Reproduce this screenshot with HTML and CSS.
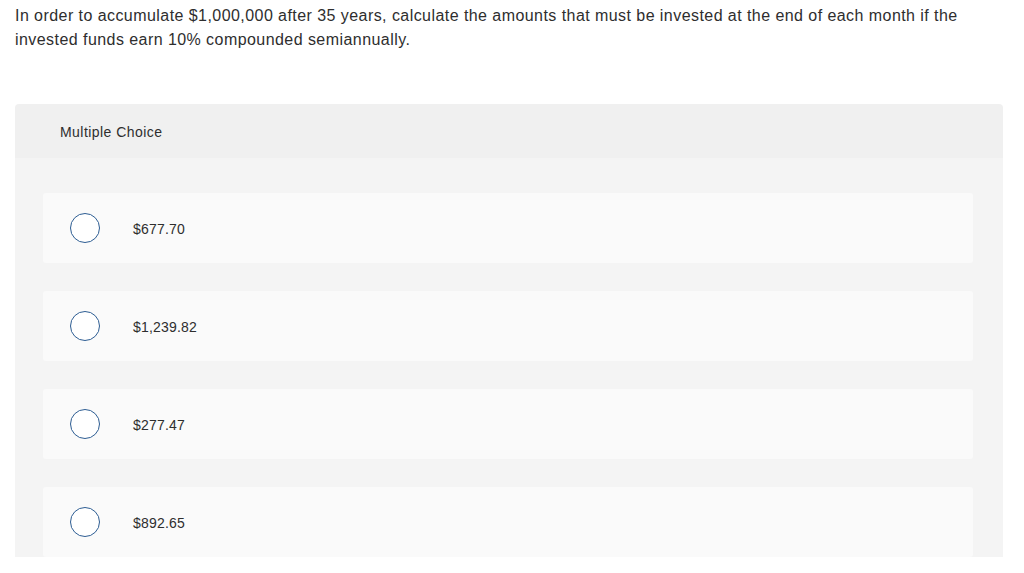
FILE: index.html
```html
<!DOCTYPE html>
<html lang="en">
<head>
<meta charset="utf-8">
<title>Multiple Choice</title>
<link rel="stylesheet" href="styles.css">
</head>
<body>
<div class="page">
  <p class="question">In order to accumulate $1,000,000 after 35 years, calculate the amounts that must be invested at the end of each month if the invested funds earn 10% compounded semiannually.</p>
  <section class="panel">
    <header class="panel-head">Multiple Choice</header>
    <div class="panel-body">
      <label class="option"><span class="radio"></span><span class="answer">$677.70</span></label>
      <label class="option"><span class="radio"></span><span class="answer">$1,239.82</span></label>
      <label class="option"><span class="radio"></span><span class="answer">$277.47</span></label>
      <label class="option"><span class="radio"></span><span class="answer">$892.65</span></label>
    </div>
  </section>
</div>
</body>
</html>
```
FILE: styles.css
```css
* { box-sizing: border-box; }
html, body { margin: 0; padding: 0; background: #fff; }
body {
  font-family: "Liberation Sans", Arial, sans-serif;
  color: #333;
}
.page {
  padding: 4px 21px 0 15px;
}
.question {
  margin: 0;
  font-size: 16px;
  line-height: 24px;
  letter-spacing: 0.44px;
  color: #2e2e2e;
}
.panel {
  margin-top: 52px;
  width: 988px;
  border-radius: 4px 4px 0 0;
  overflow: hidden;
}
.panel-head {
  height: 54px;
  background: #f0f0f0;
  padding: 2px 0 0 45px;
  display: flex;
  align-items: center;
  font-size: 14px;
  letter-spacing: 0.45px;
  color: #2e2e2e;
}
.panel-body {
  background: #f4f4f4;
  padding: 35px 30px 0 28px;
  display: flex;
  flex-direction: column;
  gap: 28px;
}
.option {
  height: 70px;
  background: #fafafa;
  border-radius: 3px;
  display: flex;
  align-items: center;
  padding-left: 27px;
}
.radio {
  width: 30px;
  height: 30px;
  border: 1.2px solid #2d5d93;
  border-radius: 50%;
  background: #fff;
  flex: none;
}
.answer {
  margin-left: 33px;
  padding-top: 2px;
  font-size: 14px;
  letter-spacing: 0.2px;
  color: #2e2e2e;
}
```
